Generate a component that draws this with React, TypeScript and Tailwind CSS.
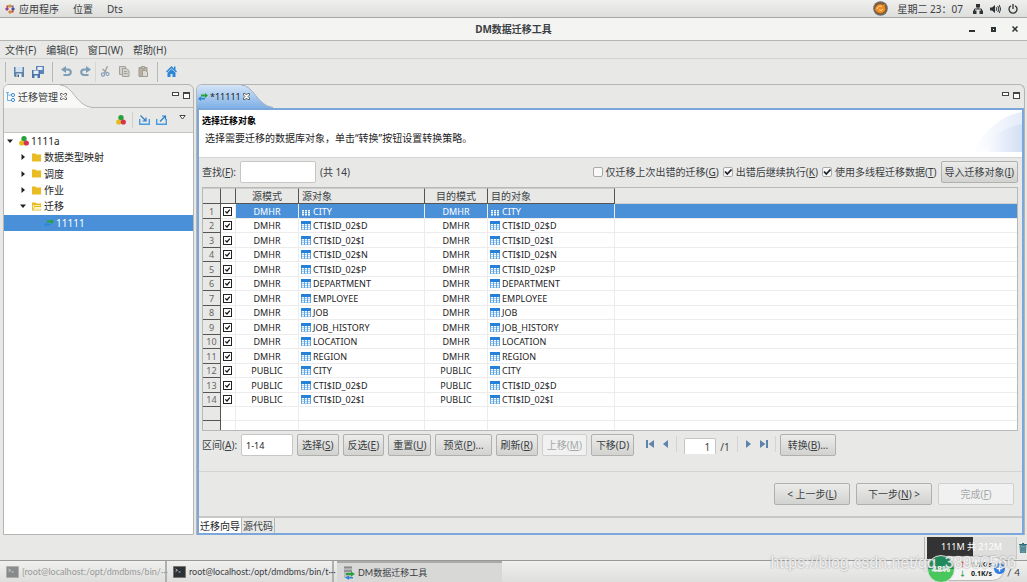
import { useState, type ReactNode } from "react";

type Mapping = {
  schema: string;
  name: string;
};

const mappings: Mapping[] = [
  { schema: "DMHR", name: "CITY" },
  { schema: "DMHR", name: "CTI$ID_02$D" },
  { schema: "DMHR", name: "CTI$ID_02$I" },
  { schema: "DMHR", name: "CTI$ID_02$N" },
  { schema: "DMHR", name: "CTI$ID_02$P" },
  { schema: "DMHR", name: "DEPARTMENT" },
  { schema: "DMHR", name: "EMPLOYEE" },
  { schema: "DMHR", name: "JOB" },
  { schema: "DMHR", name: "JOB_HISTORY" },
  { schema: "DMHR", name: "LOCATION" },
  { schema: "DMHR", name: "REGION" },
  { schema: "PUBLIC", name: "CITY" },
  { schema: "PUBLIC", name: "CTI$ID_02$D" },
  { schema: "PUBLIC", name: "CTI$ID_02$I" },
];

/* ---------- icons ---------- */

function AppsIcon() {
  return (
    <svg className="size-[10px]" viewBox="0 0 10 10">
      <path d="M5 0l2 2-2 2-2-2z" fill="#c9a02c" />
      <path d="M8 3l2 2-2 2-2-2z" fill="#4b4f9c" />
      <path d="M5 6l2 2-2 2-2-2z" fill="#d9822b" />
      <path d="M2 3l2 2-2 2-2-2z" fill="#9a3d8c" />
      <path d="M1.500 1.500h2v2h-2zM6.500 6.500h2v2h-2z" fill="#c0392b" />
      <path d="M6.500 1.500h2v2h-2z" fill="#7a4fa0" />
    </svg>
  );
}

function FoxIcon() {
  return (
    <svg className="size-[15px]" viewBox="0 0 15 15">
      <circle cx="7.500" cy="7.500" r="7.300" fill="#6b6d70" />
      <circle cx="7.500" cy="7.500" r="6" fill="#8a5a2c" />
      <path d="M2 8c1-4 5-6 8-4l2-1-.5 2.500C14 9 10 13 6.500 12 4 11.500 2.500 10 2 8z" fill="#f08c1e" />
      <path d="M4 8c1-3 3-3.500 5-2.500M6 8.500c1 1.500 3 1 4-.5" stroke="#fbe3c0" fill="none" />
    </svg>
  );
}

function NetworkIcon() {
  return (
    <svg className="size-[10px]" viewBox="0 0 10 10" fill="#2e3436">
      <path d="M3 0h4v3.500H3zM0 6.500h3.500V10H0zM6.500 6.500H10V10H6.500z" />
      <path d="M5 3v2M1.500 7V5h7v2" stroke="#2e3436" fill="none" />
    </svg>
  );
}

function SpeakerIcon() {
  return (
    <svg className="h-[10px] w-[11px]" viewBox="0 0 11 10">
      <path d="M0 3.500h2L5 1v8L2 6.500H0z" fill="#2e3436" />
      <path d="M6.200 3.200q1.300 1.800 0 3.600M7.800 2q2.200 3 0 6M9.300 1q2.600 4 0 8" stroke="#2e3436" fill="none" />
    </svg>
  );
}

function PowerIcon() {
  return (
    <svg className="size-[10px]" viewBox="0 0 10 10" fill="none" stroke="#2e3436" strokeWidth="1.300">
      <path d="M3 1.700a4 4 0 1 0 4 0M5 0v5" />
    </svg>
  );
}

function SaveIcon() {
  return (
    <svg className="size-[10px]" viewBox="0 0 10 10">
      <path d="M0 0h10v10H1L0 9z" fill="#5d83a8" />
      <path d="M1.500 0h7v5h-7z" fill="#d3e2ef" />
      <path d="M2.500 6.500h5V10h-5z" fill="#eef2f5" />
      <path d="M3.500 7.500h1.500V10H3.500z" fill="#3d5a78" />
    </svg>
  );
}

function SaveAllIcon() {
  return (
    <svg className="size-[12px]" viewBox="0 0 12 12">
      <path d="M4 0h8v8H4z" fill="#5d83b8" />
      <path d="M5.500 1h5v3h-5z" fill="#e6eef6" />
      <path d="M0 4h8v8H0z" fill="#4a74a8" />
      <path d="M1.500 4.500h5V8h-5zM2.500 9.500h3V12h-3z" fill="#e6eef6" />
    </svg>
  );
}

function UndoIcon({ flip }: { flip?: boolean }) {
  return (
    <svg className={flip ? "size-[11px] -scale-x-100" : "size-[11px]"} viewBox="0 0 11 11">
      <path d="M4 3.500h3a2.500 2.500 0 0 1 0 5.500H2.500" fill="none" stroke="#7f9db5" strokeWidth="2.200" />
      <path d="M0 3.500L5 0v7z" fill="#7f9db5" />
    </svg>
  );
}

function CutIcon() {
  return (
    <svg className="size-[11px]" viewBox="0 0 11 11" fill="none">
      <path d="M7.500 0L4.500 7M2.500 3l4.500 4" stroke="#9aa0a5" strokeWidth="1.300" />
      <circle cx="3" cy="8.500" r="1.600" stroke="#86a0ba" strokeWidth="1.200" />
      <circle cx="7.500" cy="8" r="1.500" stroke="#86a0ba" strokeWidth="1.200" />
    </svg>
  );
}

function CopyIcon() {
  return (
    <svg className="size-[11px]" viewBox="0 0 11 11" fill="#d2d0ca" stroke="#a5a29a">
      <path d="M.5.500h6v8h-6z" />
      <path d="M3.500 2.500h4l2.500 2v6H3.500z" />
      <path d="M5 5.500h3M5 7.500h3.500" />
    </svg>
  );
}

function PasteIcon() {
  return (
    <svg className="size-[11px]" viewBox="0 0 11 11" stroke="#a09a90">
      <path d="M1 1.500h8v9H1z" fill="#b9b0a0" />
      <path d="M3.500.500h3v2h-3z" fill="#ccc" />
      <path d="M4.500 4.500h3l2 2v4h-5z" fill="#dcdad6" />
    </svg>
  );
}

function HomeIcon() {
  return (
    <svg className="size-[11px]" viewBox="0 0 11 11" fill="#2f86d6">
      <path d="M5.500 0L11 5.500l-1 1L5.500 2.200 1 6.500l-1-1z" />
      <path d="M5.500 3L9.500 6.800V11h-3V8h-2v3h-3V6.800z" />
      <path d="M8 .5h1.500V4L8 2.500z" />
    </svg>
  );
}

function TreeIcon() {
  return (
    <svg className="size-[10px]" viewBox="0 0 10 10" fill="none" stroke="#6eb0e6">
      <path d="M1.500 0v8.500H5M1.500 3H5M0 .5h3" />
      <circle cx="7" cy="3" r="1.600" stroke="#3f8fd8" />
      <circle cx="7" cy="8" r="1.600" stroke="#3f8fd8" />
    </svg>
  );
}

function BallsIcon() {
  return (
    <svg className="h-[10px] w-[10px] shrink-0" viewBox="0 0 10 10">
      <circle cx="5" cy="2.800" r="2.700" fill="#27a23a" />
      <circle cx="2.700" cy="7" r="2.600" fill="#e3bd1c" />
      <circle cx="7.300" cy="7" r="2.600" fill="#d8304f" />
    </svg>
  );
}

function TrayIcon({ out }: { out?: boolean }) {
  return (
    <svg className="h-[10px] w-[11px]" viewBox="0 0 11 10" fill="none">
      <path d="M.7 4v5.300h9.600V4" stroke="#4a9be0" strokeWidth="1.400" />
      {out ? (
        <path d="M4 6.500L9 1.500M6 1h3.500v3.500" stroke="#2d7cc8" strokeWidth="1.200" />
      ) : (
        <path d="M1.500.500L6.500 5.500M7 2.500V6H3.500" stroke="#2d7cc8" strokeWidth="1.200" />
      )}
    </svg>
  );
}

function CloseIcon() {
  return (
    <svg className="size-[7px]" viewBox="0 0 7 7" fill="#fdfdfd" stroke="#444" strokeWidth=".8">
      <path d="M.5.500h1.700L3.500 2 4.800.500h1.700v1.500L5 3.500 6.500 5v1.500H4.800L3.500 5 2.200 6.500H.5V5L2 3.500.5 2z" />
    </svg>
  );
}

function ArrowsIcon() {
  return (
    <svg className="h-[8px] w-[10px] shrink-0" viewBox="0 0 10 8">
      <path d="M3 1.500h4V0l3 2.500L7 5V3.500H3z" fill="#27a23a" />
      <path d="M7 4.800H3V3.300L0 5.700 3 8V6.500h4z" fill="#2f86d6" />
    </svg>
  );
}

function FolderIcon({ open }: { open?: boolean }) {
  return (
    <svg className="h-[9px] w-[10px] shrink-0" viewBox="0 0 11 9">
      <path d="M0 0h4l1 1.300h5V9H0z" fill="#e8bc22" />
      {open && <path d="M1 3h8v1H2.500L1 7.500zM3 5h7.500L9.500 8h-8z" fill="#fdf3c8" />}
    </svg>
  );
}

function GridIcon({ selected }: { selected?: boolean }) {
  return (
    <svg className="h-[9px] w-[10px] shrink-0" viewBox="0 0 10 9">
      <path d="M0 0h10v9H0z" fill={selected ? "#4a90d9" : "#5fa5e4"} />
      {!selected && <path d="M0 0h10v3H0z" fill="#2480d8" />}
      <path
        d="M1 3h2v1.400H1zM4 3h2v1.400H4zM7 3h2v1.400H7zM1 5h2v1.400H1zM4 5h2v1.400H4zM7 5h2v1.400H7zM1 7h2v1.400H1zM4 7h2v1.400H4zM7 7h2v1.400H7z"
        fill="#f4f9fe"
      />
    </svg>
  );
}

function TerminalIcon({ faded }: { faded?: boolean }) {
  return (
    <svg className={faded ? "h-[12px] w-[13px] shrink-0 opacity-50" : "h-[12px] w-[13px] shrink-0"} viewBox="0 0 13 12">
      <path d="M.5.500h12v11H.5z" fill="#2c3235" stroke="#777" />
      <path d="M2.500 3l2 1.300-2 1.300M5.500 6h2" stroke="#ddd" fill="none" strokeWidth=".8" />
    </svg>
  );
}

function ServerIcon() {
  return (
    <svg className="h-[14px] w-[12px] shrink-0" viewBox="0 0 12 14">
      <path d="M1 0h8v12H1z" fill="#b8b8b8" />
      <path d="M1 1.500h8M1 5h8" stroke="#8a8a8a" strokeWidth="1.500" />
      <path d="M3 7h5V5.500L12 8l-4 2.500V9H3z" fill="#27a23a" />
      <path d="M10 12.500H6V14l-4-2.500L6 9.500v1.500h4z" fill="#2f86d6" />
    </svg>
  );
}

function TrashIcon() {
  return (
    <svg className="h-[10px] w-[8px]" viewBox="0 0 8 10">
      <path d="M1 2.500h6L6.500 10h-5z" fill="#6fa6b0" stroke="#35707c" strokeWidth=".8" />
      <path d="M0 1.500h8M3 .5h2" stroke="#35707c" />
      <path d="M3 4v4.500M5 4v4.500" stroke="#2f6672" strokeWidth=".8" />
    </svg>
  );
}

function PanelControls() {
  return (
    <div className="flex items-start gap-1 pt-[7px]">
      <button aria-label="最小化" className="h-[4px] w-[7px] border border-[#444] bg-white" />
      <button aria-label="最大化" className="size-[7px] border border-t-2 border-[#444] bg-white" />
    </div>
  );
}

function NavIcon({ d }: { d: string }) {
  return (
    <svg className="size-[8px]" viewBox="0 0 8 8" fill="#5f84ab">
      <path d={d} />
    </svg>
  );
}

/* ---------- controls ---------- */

function PushButton({
  children,
  disabled,
  size = "px-1",
}: {
  children: ReactNode;
  disabled?: boolean;
  size?: string;
}) {
  return (
    <button
      disabled={disabled}
      className={`h-[22px] shrink-0 whitespace-nowrap rounded-[2px] border ${size} ${
        disabled
          ? "border-[#cfcfcf] bg-[#f1f1f1] text-[#a5a8a8]"
          : "border-[#b0b0ae] bg-linear-to-b from-[#ececeb] to-[#d2d2d0]"
      }`}
    >
      {children}
    </button>
  );
}

function Option({ children, checked }: { children: ReactNode; checked?: boolean }) {
  const [on, setOn] = useState(!!checked);

  return (
    <label className="flex items-center gap-[3px] whitespace-nowrap">
      <span className="grid">
        <input
          type="checkbox"
          checked={on}
          onChange={() => setOn(!on)}
          className="col-start-1 row-start-1 size-[10px] appearance-none rounded-[2px] border border-[#aaa] bg-[#f8f8f8]"
        />
        {on && (
          <svg className="pointer-events-none col-start-1 row-start-1 size-[10px]" viewBox="0 0 10 10">
            <path d="M2 4.500L4.300 7 8.500 2.500" fill="none" stroke="#1d2224" strokeWidth="1.800" />
          </svg>
        )}
      </span>
      <span>{children}</span>
    </label>
  );
}

function RowCheck({ label }: { label: string }) {
  return (
    <span className="ml-[2px] grid size-[9px]">
      <input
        type="checkbox"
        defaultChecked
        aria-label={label}
        className="peer col-start-1 row-start-1 size-[9px] appearance-none border border-[#222] bg-white"
      />
      <svg
        className="pointer-events-none invisible col-start-1 row-start-1 size-[9px] peer-checked:visible"
        viewBox="0 0 9 9"
      >
        <path d="M2.300 4.300L4 6l2.800-3.300" fill="none" stroke="#111" strokeWidth="1.200" />
      </svg>
    </span>
  );
}

function TreeRow({
  label,
  icon,
  arrow,
  depth,
  selected,
}: {
  label: string;
  icon: ReactNode;
  arrow?: "open" | "closed";
  depth: string;
  selected?: boolean;
}) {
  return (
    <li className={`flex items-center ${depth} ${selected ? "bg-[#4a90d9] text-white" : "text-[#1d2224]"}`}>
      <svg className="mr-[6px] size-[6px] shrink-0" viewBox="0 0 6 6" fill="#1d2224">
        {arrow === "open" && <path d="M0 1.500h6L3 5z" />}
        {arrow === "closed" && <path d="M1.500 0v6L5 3z" />}
      </svg>
      {icon}
      <span className="ml-[2px]">{label}</span>
    </li>
  );
}

function Divider() {
  return <span className="h-[20px] w-px bg-[#b8b8b6]" />;
}

/* ---------- page ---------- */

function TopBar() {
  return (
    <header className="flex h-[18px] shrink-0 items-center gap-[14px] border-b border-[#a8a8a6] bg-linear-to-b from-[#efefee] to-[#dededd] px-[5px]">
      <button className="flex items-center gap-1">
        <AppsIcon />
        应用程序
      </button>
      <button>位置</button>
      <button>Dts</button>
      <div className="ml-auto flex items-center gap-[7px] pr-1">
        <FoxIcon />
        <span className="mx-[3px]">星期二 23：07</span>
        <NetworkIcon />
        <SpeakerIcon />
        <PowerIcon />
      </div>
    </header>
  );
}

function TitleBar() {
  return (
    <div className="grid h-[23px] shrink-0 grid-cols-[1fr_auto_1fr] items-center border-b border-[#b4b4b2] bg-[#f4f4f3]">
      <h1 className="col-start-2 font-bold">DM数据迁移工具</h1>
      <div className="flex items-center justify-end gap-[16px] pr-[9px]">
        <button aria-label="最小化" className="h-[6px] w-[6px] border-b-2 border-[#2e3436]" />
        <button aria-label="最大化" className="size-[5px] border-2 border-[#2e3436]" />
        <button aria-label="关闭">
          <svg className="size-[6px]" viewBox="0 0 6 6" stroke="#2e3436" strokeWidth="1.500">
            <path d="M.5.500l5 5M5.500.500l-5 5" />
          </svg>
        </button>
      </div>
    </div>
  );
}

function MenuBar() {
  return (
    <nav className="flex h-[18px] shrink-0 items-center gap-[10px] border-b border-[#d4d4d2] px-[5px]">
      <button>文件(F)</button>
      <button>编辑(E)</button>
      <button>窗口(W)</button>
      <button>帮助(H)</button>
    </nav>
  );
}

function ToolBar() {
  return (
    <div className="flex h-[25px] shrink-0 items-center gap-[8px] px-[5px]">
      <Divider />
      <button aria-label="保存"><SaveIcon /></button>
      <button aria-label="全部保存"><SaveAllIcon /></button>
      <Divider />
      <button aria-label="撤销"><UndoIcon /></button>
      <button aria-label="重做"><UndoIcon flip /></button>
      <span className="-mx-1 h-[20px] w-px bg-[#d6d6d4]" />
      <button aria-label="剪切"><CutIcon /></button>
      <button aria-label="复制"><CopyIcon /></button>
      <button aria-label="粘贴"><PasteIcon /></button>
      <Divider />
      <button aria-label="主页"><HomeIcon /></button>
    </div>
  );
}

function Sidebar() {
  return (
    <aside className="flex w-[191px] shrink-0 flex-col rounded-t-md border border-[#b4b4b2] bg-[#e8e8e7]">
      <div className="flex h-[23px] shrink-0 justify-between">
        <div className="relative flex h-[23px] w-[92px] items-center">
          <svg className="absolute inset-0 h-[23px] w-[92px]" viewBox="0 0 92 23">
            <path d="M0 23V5Q0 0 5 0H56C69 0 72 21 88 22.500V23z" fill="#f8f8f7" />
            <path d="M56 0C69 0 72 21 88 22.500H92" fill="none" stroke="#b4b4b2" />
          </svg>
          <div className="relative flex items-center gap-[2px] pl-[2px]">
            <TreeIcon />
            <span>迁移管理</span>
            <CloseIcon />
          </div>
        </div>
        <div className="flex flex-1 justify-end border-b border-[#b4b4b2] pr-[3px]">
          <PanelControls />
        </div>
      </div>
      <div className="flex h-[25px] shrink-0 items-center justify-end gap-[6px] border-b border-[#c4c4c2] pr-[7px]">
        <button aria-label="数据库"><BallsIcon /></button>
        <span className="h-[16px] w-px bg-[#d0d0ce]" />
        <button aria-label="导入"><TrayIcon /></button>
        <button aria-label="导出"><TrayIcon out /></button>
        <button aria-label="菜单" className="mb-[6px] ml-[6px]">
          <svg className="h-[5px] w-[7px]" viewBox="0 0 7 5" fill="#fff" stroke="#444">
            <path d="M.8.500h5.400L3.500 4z" />
          </svg>
        </button>
      </div>
      <div className="flex-1 bg-white">
        <ul className="grid h-[98px] grid-rows-6">
          <TreeRow depth="pl-[3px]" arrow="open" icon={<BallsIcon />} label="1111a" />
          <TreeRow depth="pl-[16px]" arrow="closed" icon={<FolderIcon />} label="数据类型映射" />
          <TreeRow depth="pl-[16px]" arrow="closed" icon={<FolderIcon />} label="调度" />
          <TreeRow depth="pl-[16px]" arrow="closed" icon={<FolderIcon />} label="作业" />
          <TreeRow depth="pl-[16px]" arrow="open" icon={<FolderIcon open />} label="迁移" />
          <TreeRow depth="pl-[28px]" icon={<ArrowsIcon />} label="11111" selected />
        </ul>
      </div>
    </aside>
  );
}

function MappingTable() {
  const head = "border-r border-b border-[#555] border-t border-t-[#ccc] bg-[#e8e8e7] p-0 font-normal";
  const cell = "border-r border-b border-[#ececec] p-0";
  const rowHead = "border-r border-b border-[#555] bg-[#e8e8e7] p-0 text-center font-normal text-[#666]";

  return (
    <div className="ml-[3px] mr-[4px] min-h-0 flex-1 overflow-hidden border border-[#b8b8b6] bg-white">
      <table className="w-full table-fixed border-separate border-spacing-0 leading-[13px]">
        <colgroup>
          <col className="w-[18px]" />
          <col className="w-[15px]" />
          <col className="w-[63px]" />
          <col className="w-[126px]" />
          <col className="w-[63px]" />
          <col className="w-[127px]" />
          <col />
        </colgroup>
        <thead>
          <tr className="h-[16px]">
            <th className={head} />
            <th className={head} />
            <th className={head}>源模式</th>
            <th className={`${head} pl-[3px] text-left`}>源对象</th>
            <th className={head}>目的模式</th>
            <th className={`${head} pl-[3px] text-left`}>目的对象</th>
            <th className="border-b border-[#d0d0ce] bg-[#e8e8e7] p-0" />
          </tr>
        </thead>
        <tbody className="text-[9px]">
          {mappings.map((m, i) => (
            <tr
              key={i}
              className={`odd:h-[15px] even:h-[14px] ${i === 0 ? "bg-[#4a90d9] text-white" : "text-[#1d2224]"}`}
            >
              <th className={rowHead}>{i + 1}</th>
              <td className={`${cell} bg-white`}>
                <RowCheck label={`${m.schema}.${m.name}`} />
              </td>
              <td className={`${cell} text-center`}>{m.schema}</td>
              <td className={`${cell} pl-[2px]`}>
                <span className="flex items-center gap-[2px]">
                  <GridIcon selected={i === 0} />
                  {m.name}
                </span>
              </td>
              <td className={`${cell} text-center`}>{m.schema}</td>
              <td className={`${cell} pl-[2px]`}>
                <span className="flex items-center gap-[2px]">
                  <GridIcon selected={i === 0} />
                  {m.name}
                </span>
              </td>
              <td className="border-b border-[#ececec] p-0" />
            </tr>
          ))}
          {[0, 1].map((i) => (
            <tr key={i} className="h-[14px]">
              <th className={rowHead} />
              <td className={cell} />
              <td className={cell} />
              <td className={cell} />
              <td className={cell} />
              <td className={cell} />
              <td className="border-b border-[#ececec] p-0" />
            </tr>
          ))}
        </tbody>
      </table>
    </div>
  );
}

function Pager() {
  const line = "h-[16px] w-px bg-[#d4d4d2]";

  return (
    <div className="ml-2 flex items-center gap-[7px]">
      <button aria-label="第一页"><NavIcon d="M0 0h2v8H0zM8 0v8L2.500 4z" /></button>
      <button aria-label="上一页"><NavIcon d="M7 0v8L2 4z" /></button>
      <span className={line} />
      <div className="flex items-end gap-[4px] pt-1">
        <input
          aria-label="页码"
          defaultValue="1"
          className="h-[16px] w-[32px] rounded-t-[2px] border border-b-0 border-[#c6c6c4] bg-white px-[5px] text-right"
        />
        <span>/1</span>
      </div>
      <span className={line} />
      <button aria-label="下一页"><NavIcon d="M1 0v8l5-4z" /></button>
      <button aria-label="最后一页"><NavIcon d="M6 0h2v8H6zM0 0v8l5.500-4z" /></button>
      <span className={line} />
    </div>
  );
}

function Editor() {
  return (
    <main className="flex min-w-0 flex-1 flex-col rounded-t-md border border-b-0 border-[#b4b4b2]">
      <div className="flex h-[23px] shrink-0 justify-between pr-[4px]">
        <div className="relative flex h-[23px] w-[78px] items-center">
          <svg className="absolute inset-0 h-[23px] w-[78px]" viewBox="0 0 78 23">
            <defs>
              <linearGradient id="tab" x1="0" y1="0" x2="0" y2="1">
                <stop offset="0" stopColor="#d3e4f7" />
                <stop offset="1" stopColor="#7fb0e6" />
              </linearGradient>
            </defs>
            <path d="M0 23V5Q0 0 5 0H44C57 0 60 21 76 22.500V23z" fill="url(#tab)" />
            <path d="M44 0C57 0 60 21 76 22.500" fill="none" stroke="#9fb0c2" />
          </svg>
          <div className="relative flex items-center gap-[2px] pl-px text-[9px] text-[#1d2224]">
            <ArrowsIcon />
            <span>*11111</span>
            <CloseIcon />
          </div>
        </div>
        <PanelControls />
      </div>
      <div className="flex min-h-0 flex-1 flex-col border-2 border-[#7ca7db] bg-[#e8e8e7]">
        <section className="flex h-[48px] shrink-0 justify-between border-b border-[#d4d4d2] bg-white text-[#1d2224]">
          <div className="pl-[3px] pt-[3px]">
            <h2 className="text-[9px] leading-[16px] font-bold text-black">选择迁移对象</h2>
            <p className="pl-[3px] leading-[19px]">选择需要迁移的数据库对象，单击“转换”按钮设置转换策略。</p>
          </div>
          <svg className="h-[42px] w-[60px]" viewBox="0 0 60 42">
            <defs>
              <linearGradient id="swoosh" x1="0" y1="0" x2="1" y2="0">
                <stop offset="0" stopColor="#fff" />
                <stop offset="1" stopColor="#d3dff5" />
              </linearGradient>
            </defs>
            <path d="M10 42C25 18 40 5 60 2v40z" fill="url(#swoosh)" opacity=".6" />
            <path d="M20 42C32 24 45 16 60 14v28z" fill="url(#swoosh)" />
          </svg>
        </section>

        <div className="flex h-[29px] shrink-0 items-center gap-[4px] pb-px pl-[3px] pr-px">
          <label htmlFor="search">
            查找(<u>F</u>):
          </label>
          <input id="search" className="h-[22px] w-[76px] rounded-[2px] border border-[#c6c6c4] bg-white px-1" />
          <span>(共 14)</span>
          <div className="ml-auto flex items-center gap-[4px] pr-[3px]">
            <Option>
              仅迁移上次出错的迁移(<u>G</u>)
            </Option>
            <Option checked>
              出错后继续执行(<u>K</u>)
            </Option>
            <Option checked>
              使用多线程迁移数据(<u>T</u>)
            </Option>
            <PushButton size="px-[3px]">
              导入迁移对象(<u>I</u>)
            </PushButton>
          </div>
        </div>

        <MappingTable />

        <div className="flex h-[41px] shrink-0 items-start gap-[4px] border-b border-[#d4d4d2] px-[3px] pt-[3px]">
          <div className="flex items-center gap-[4px]">
            <label htmlFor="range">
              区间(<u>A</u>):
            </label>
            <input
              id="range"
              defaultValue="1-14"
              className="h-[22px] w-[52px] rounded-[2px] border border-[#c6c6c4] bg-white px-1 text-[9px] text-[#1d2224]"
            />
          </div>
          <PushButton>选择(<u>S</u>)</PushButton>
          <PushButton>反选(<u>E</u>)</PushButton>
          <PushButton>重置(<u>U</u>)</PushButton>
          <PushButton size="px-[7px]">预览(<u>P</u>)...</PushButton>
          <PushButton>刷新(<u>R</u>)</PushButton>
          <PushButton disabled>上移(<u>M</u>)</PushButton>
          <PushButton>下移(D)</PushButton>
          <Pager />
          <PushButton size="px-[7px]">转换(<u>B</u>)...</PushButton>
        </div>

        <div className="flex h-[46px] shrink-0 items-center justify-end gap-[6px] border-b-2 border-[#c8c8c6] px-[8px]">
          <PushButton size="w-[76px]">&lt; 上一步(<u>L</u>)</PushButton>
          <PushButton size="w-[76px]">下一步(<u>N</u>) &gt;</PushButton>
          <PushButton size="w-[76px]" disabled>完成(<u>F</u>)</PushButton>
        </div>
        <div className="flex h-[15px] shrink-0">
          <button className="bg-white px-px text-[#1d2224]">迁移向导</button>
          <button className="border-x border-[#b8b8b6] px-px">源代码</button>
        </div>
      </div>
    </main>
  );
}

function StatusBar() {
  return (
    <div className="flex h-[25px] shrink-0 items-center justify-end gap-[2px]">
      <span className="h-[22px] w-px bg-[#b4b4b2]" />
      <div className="flex h-[22px] w-[90px] items-start justify-center border-r border-[#c6c6c4] bg-linear-to-r from-[#333] from-52% to-[#dededd] to-52% pt-[3px] text-[9px] text-white">
        111M 共 212M
      </div>
      <button aria-label="回收"><TrashIcon /></button>
    </div>
  );
}

function TaskBar() {
  const item = "flex w-[167px] shrink-0 items-center gap-[3px] whitespace-nowrap border-r-2 border-[#b0b0ae] pl-[6px]";

  return (
    <footer className="flex h-[22px] shrink-0 border-t border-[#999] bg-linear-to-b from-[#f0f0ef] to-[#dededd] font-['Lato','Noto_Sans_CJK_SC',sans-serif] text-[9px]">
      <button className={`${item} text-[#999]`}>
        <TerminalIcon faded />
        <span>[root@localhost:/opt/dmdbms/bin/···</span>
      </button>
      <button className={item}>
        <TerminalIcon />
        <span>root@localhost:/opt/dmdbms/bin/t···</span>
      </button>
      <button className="ml-[3px] flex w-[165px] shrink-0 items-center gap-[3px] border-t-2 border-[#aaa] bg-[#d8d8d7] pl-[6px]">
        <ServerIcon />
        DM数据迁移工具
      </button>
      <span className="ml-auto self-center pr-[7px] text-[10px]">/ 4</span>
    </footer>
  );
}

// floating network monitor
function SpeedBadge() {
  return (
    <div className="absolute right-[22px] bottom-px flex h-[25px] w-[78px] items-center rounded-full border border-[#bbb] bg-[#f4f4f4] text-[7px] leading-[9px] font-bold text-[#222]">
      <div className="-ml-px flex size-[28px] shrink-0 items-center justify-center rounded-full border border-[#ddd] bg-linear-to-b from-[#218a5a] from-50% to-[#48c85c] to-50% text-[9px] text-white">
        48%
      </div>
      <div className="ml-[4px]">
        <p><span className="mr-[5px] text-[#e04a30]">↑</span>1.1K/s</p>
        <p><span className="mr-[5px] text-[#2a9a48]">↓</span>0.1K/s</p>
      </div>
      <svg className="ml-[2px] size-[11px] shrink-0" viewBox="0 0 11 11">
        <circle cx="5.500" cy="5.500" r="5.500" fill="#2f7de0" />
        <path d="M5.500 2.500v6M2.500 5.500h6" stroke="#fff" strokeWidth="1.500" />
      </svg>
    </div>
  );
}

export default function App() {
  return (
    <div className="relative flex h-screen flex-col overflow-hidden bg-[#e8e8e7] font-['Noto_Sans','Noto_Sans_CJK_SC',sans-serif] text-[10px] leading-[14px] text-[#3a4042]">
      <TopBar />
      <TitleBar />
      <MenuBar />
      <ToolBar />
      <div className="flex min-h-0 flex-1 gap-[2px] pl-[3px] pr-[2px]">
        <Sidebar />
        <Editor />
      </div>
      <StatusBar />
      <TaskBar />
      <SpeedBadge />
      <p className="pointer-events-none absolute right-[11px] bottom-[9px] font-['Liberation_Sans',sans-serif] text-[16px] leading-[20px] text-white/80 [text-shadow:0_0_2px_#888]">
        https://blog.csdn.net/qq_38900566
      </p>
    </div>
  );
}
